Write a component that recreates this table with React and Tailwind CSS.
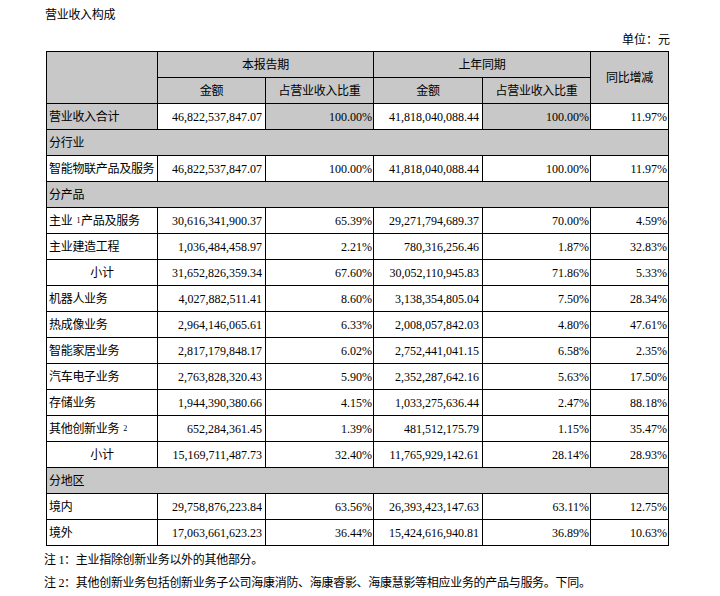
const rows = [
  { kind: "total", label: "营业收入合计", a: "46,822,537,847.07", p: "100.00%", b: "41,818,040,088.44", q: "100.00%", y: "11.97%" },
  { kind: "section", label: "分行业" },
  { label: "智能物联产品及服务", a: "46,822,537,847.07", p: "100.00%", b: "41,818,040,088.44", q: "100.00%", y: "11.97%" },
  { kind: "section", label: "分产品" },
  { label: "主业", sup: "1", rest: "产品及服务", a: "30,616,341,900.37", p: "65.39%", b: "29,271,794,689.37", q: "70.00%", y: "4.59%" },
  { label: "主业建造工程", a: "1,036,484,458.97", p: "2.21%", b: "780,316,256.46", q: "1.87%", y: "32.83%" },
  { kind: "sub", label: "小计", a: "31,652,826,359.34", p: "67.60%", b: "30,052,110,945.83", q: "71.86%", y: "5.33%" },
  { label: "机器人业务", a: "4,027,882,511.41", p: "8.60%", b: "3,138,354,805.04", q: "7.50%", y: "28.34%" },
  { label: "热成像业务", a: "2,964,146,065.61", p: "6.33%", b: "2,008,057,842.03", q: "4.80%", y: "47.61%" },
  { label: "智能家居业务", a: "2,817,179,848.17", p: "6.02%", b: "2,752,441,041.15", q: "6.58%", y: "2.35%" },
  { label: "汽车电子业务", a: "2,763,828,320.43", p: "5.90%", b: "2,352,287,642.16", q: "5.63%", y: "17.50%" },
  { label: "存储业务", a: "1,944,390,380.66", p: "4.15%", b: "1,033,275,636.44", q: "2.47%", y: "88.18%" },
  { label: "其他创新业务", sup: "2", rest: "", a: "652,284,361.45", p: "1.39%", b: "481,512,175.79", q: "1.15%", y: "35.47%" },
  { kind: "sub", label: "小计", a: "15,169,711,487.73", p: "32.40%", b: "11,765,929,142.61", q: "28.14%", y: "28.93%" },
  { kind: "section", label: "分地区" },
  { label: "境内", a: "29,758,876,223.84", p: "63.56%", b: "26,393,423,147.63", q: "63.11%", y: "12.75%" },
  { label: "境外", a: "17,063,661,623.23", p: "36.44%", b: "15,424,616,940.81", q: "36.89%", y: "10.63%" },
];

const cell = "border border-black h-[26px] p-0 align-middle";
const head = `${cell} font-normal text-center tracking-[-0.3px]`;

function Label({ r }) {
  if (r.sup) {
    return (
      <>
        {r.label}
        <sup className="text-[8px] relative -top-[2px] pl-[4px] pr-[1px]">{r.sup}</sup>
        {r.rest}
      </>
    );
  }
  return r.label;
}

export default function App() {
  return (
    <div className="w-[720px] h-[596px] bg-white text-black text-[12px] font-['Liberation_Serif','Noto_Sans_CJK_SC',serif]">
      <div className="pl-[45px] pt-[8px] leading-[14px] tracking-[-0.3px]">营业收入构成</div>
      <div className="pr-[50px] mt-[11px] text-right leading-[14px]">单位：元</div>
      <table className="ml-[46px] mt-[4px] table-fixed border-collapse leading-[14px]">
        <colgroup>
          <col className="w-[111px]" />
          <col className="w-[108px]" />
          <col className="w-[108px]" />
          <col className="w-[109px]" />
          <col className="w-[108px]" />
          <col className="w-[78px]" />
        </colgroup>
        <thead>
          <tr className="bg-[#c8c8c8]">
            <th rowSpan={2} className={cell}></th>
            <th colSpan={2} className={head}>本报告期</th>
            <th colSpan={2} className={head}>上年同期</th>
            <th rowSpan={2} className={head}>同比增减</th>
          </tr>
          <tr className="bg-[#c8c8c8]">
            <th className={head}>金额</th>
            <th className={head}>占营业收入比重</th>
            <th className={head}>金额</th>
            <th className={head}>占营业收入比重</th>
          </tr>
        </thead>
        <tbody>
          {rows.map((r, i) =>
            r.kind === "section" ? (
              <tr key={i} className="bg-[#c8c8c8]">
                <td colSpan={6} className={`${cell} pl-[2px] tracking-[-0.3px]`}>{r.label}</td>
              </tr>
            ) : (
              <tr key={i}>
                <td className={`${cell} tracking-[-0.3px] ${r.kind === "sub" ? "text-center" : "pl-[2px]"} ${r.kind === "total" ? "bg-[#c8c8c8]" : ""}`}>
                  <Label r={r} />
                </td>
                <td className={`${cell} text-right pr-[3px]`}>{r.a}</td>
                <td className={`${cell} text-right pr-[1px] ${r.kind === "total" ? "bg-[#c8c8c8]" : ""}`}>{r.p}</td>
                <td className={`${cell} text-right pr-[3px]`}>{r.b}</td>
                <td className={`${cell} text-right pr-[1px] ${r.kind === "total" ? "bg-[#c8c8c8]" : ""}`}>{r.q}</td>
                <td className={`${cell} text-right pr-[1px]`}>{r.y}</td>
              </tr>
            )
          )}
        </tbody>
      </table>
      <div className="pl-[44px] mt-[7px] leading-[14px] tracking-[-0.3px]">注 1：主业指除创新业务以外的其他部分。</div>
      <div className="pl-[44px] mt-[9px] leading-[14px] tracking-[-0.3px]">
        注 2：其他创新业务包括创新业务子公司海康消防、海康睿影、海康慧影等相应业务的产品与服务。下同。
      </div>
    </div>
  );
}
